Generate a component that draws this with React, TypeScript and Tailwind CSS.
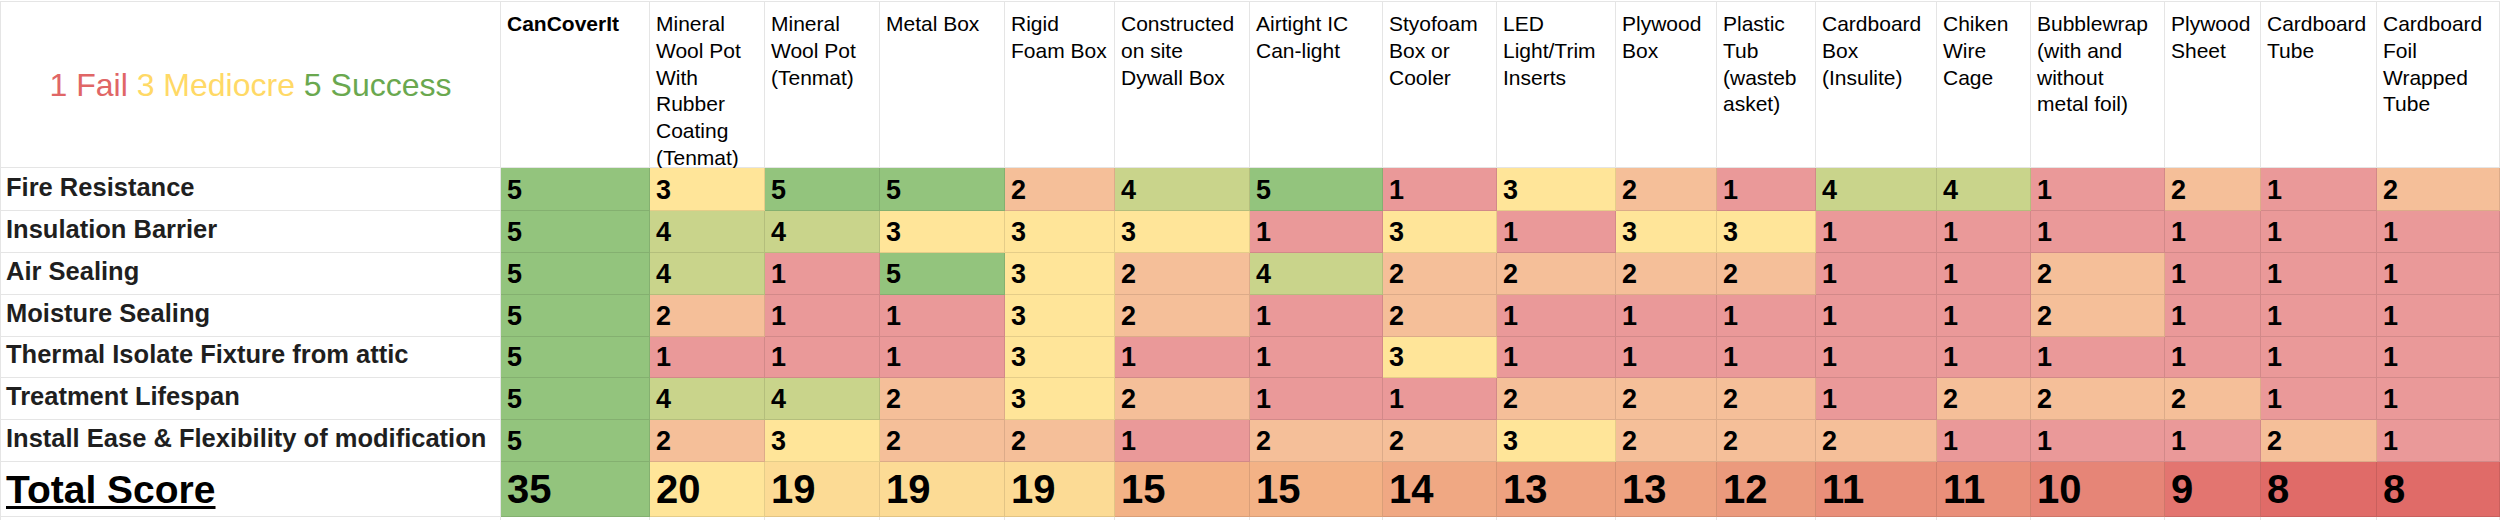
import React from 'react';

interface Material {
  key: string;
  lines: string[];
  bold?: boolean;
}

const MATERIALS: Material[] = [
  { key: 'cancoverit', lines: ['CanCoverIt'], bold: true },
  { key: 'mw-rubber', lines: ['Mineral', 'Wool Pot', 'With', 'Rubber', 'Coating', '(Tenmat)'] },
  { key: 'mw-tenmat', lines: ['Mineral', 'Wool Pot', '(Tenmat)'] },
  { key: 'metal', lines: ['Metal Box'] },
  { key: 'rigid', lines: ['Rigid', 'Foam Box'] },
  { key: 'drywall', lines: ['Constructed', 'on site', 'Dywall Box'] },
  { key: 'airtight', lines: ['Airtight IC', 'Can-light'] },
  { key: 'styofoam', lines: ['Styofoam', 'Box or', 'Cooler'] },
  { key: 'led', lines: ['LED', 'Light/Trim', 'Inserts'] },
  { key: 'plywood-box', lines: ['Plywood', 'Box'] },
  { key: 'plastic', lines: ['Plastic', 'Tub', '(wasteb', 'asket)'] },
  { key: 'cardboard-box', lines: ['Cardboard', 'Box', '(Insulite)'] },
  { key: 'chiken', lines: ['Chiken', 'Wire', 'Cage'] },
  { key: 'bubble', lines: ['Bubblewrap', '(with and', 'without', 'metal foil)'] },
  { key: 'plywood-sheet', lines: ['Plywood', 'Sheet'] },
  { key: 'tube', lines: ['Cardboard', 'Tube'] },
  { key: 'foil-tube', lines: ['Cardboard', 'Foil', 'Wrapped', 'Tube'] },
];

const CRITERIA: { label: string; scores: number[] }[] = [
  { label: 'Fire Resistance', scores: [5, 3, 5, 5, 2, 4, 5, 1, 3, 2, 1, 4, 4, 1, 2, 1, 2] },
  { label: 'Insulation Barrier', scores: [5, 4, 4, 3, 3, 3, 1, 3, 1, 3, 3, 1, 1, 1, 1, 1, 1] },
  { label: 'Air Sealing', scores: [5, 4, 1, 5, 3, 2, 4, 2, 2, 2, 2, 1, 1, 2, 1, 1, 1] },
  { label: 'Moisture Sealing', scores: [5, 2, 1, 1, 3, 2, 1, 2, 1, 1, 1, 1, 1, 2, 1, 1, 1] },
  { label: 'Thermal Isolate Fixture from attic', scores: [5, 1, 1, 1, 3, 1, 1, 3, 1, 1, 1, 1, 1, 1, 1, 1, 1] },
  { label: 'Treatment Lifespan', scores: [5, 4, 4, 2, 3, 2, 1, 1, 2, 2, 2, 1, 2, 2, 2, 1, 1] },
  { label: 'Install Ease & Flexibility of modification', scores: [5, 2, 3, 2, 2, 1, 2, 2, 3, 2, 2, 2, 1, 1, 1, 2, 1] },
];

// conditional-format style colour scale, 1 = red, 3 = yellow, 5 = green
const SCORE_BG: Record<number, string> = {
  1: 'bg-[#ea9999]',
  2: 'bg-[#f5bf99]',
  3: 'bg-[#ffe599]',
  4: 'bg-[#c9d48b]',
  5: 'bg-[#93c47d]',
};

const TOTAL_BG: Record<number, string> = {
  35: 'bg-[#93c47d]',
  20: 'bg-[#ffe599]',
  19: 'bg-[#fcdb95]',
  15: 'bg-[#f3b286]',
  14: 'bg-[#f0a883]',
  13: 'bg-[#eea280]',
  12: 'bg-[#eb9a7d]',
  11: 'bg-[#e98f7a]',
  10: 'bg-[#e68577]',
  9: 'bg-[#e37570]',
  8: 'bg-[#e06b68]',
};

const cell = 'border-r border-b border-black/10';

export default function App() {
  const totals = MATERIALS.map((_, i) =>
    CRITERIA.reduce((sum, row) => sum + row.scores[i], 0)
  );

  return (
    <div className="w-[2500px] h-[520px] overflow-hidden bg-white pt-px font-[Liberation_Sans,Arial,sans-serif] text-black">
      <div className="grid grid-cols-[501px_149px_115px_115px_125px_110px_135px_133px_114px_119px_101px_99px_121px_94px_134px_96px_116px_123px] grid-rows-[166px_43px_42px_42px_42px_41px_42px_42px_55px_3px] border-t border-black/10">
        {/* Header row */}
        <div className={`${cell} border-l flex items-center justify-center text-[32px] leading-none`}>
          <span className="text-[#e06666]">1 Fail</span>
          <span className="text-[#ffd966]">&nbsp;3 Mediocre</span>
          <span className="text-[#6aa84f]">&nbsp;5 Success</span>
        </div>
        {MATERIALS.map((m) => (
          <div
            key={m.key}
            className={`${cell} pt-[9px] pl-[6px] text-[21px] leading-[26.8px] ${m.bold ? 'font-bold' : ''}`}
          >
            {m.lines.map((line) => (
              <div key={line} className="whitespace-nowrap">
                {line}
              </div>
            ))}
          </div>
        ))}

        {/* Criteria rows */}
        {CRITERIA.map((row) => (
          <React.Fragment key={row.label}>
            <div className={`${cell} border-l flex items-end pl-[5px] pb-[10px] text-[25.5px] font-bold leading-none text-[#1f1f1f] whitespace-nowrap`}>
              {row.label}
            </div>
            {row.scores.map((s, i) => (
              <div
                key={MATERIALS[i].key}
                className={`${cell} ${SCORE_BG[s]} flex items-end pl-[6px] pb-[6px] text-[27px] font-bold leading-none`}
              >
                {s}
              </div>
            ))}
          </React.Fragment>
        ))}

        {/* Total row */}
        <div className={`${cell} border-l flex items-end pl-[5px] pb-[7px] text-[39px] font-bold leading-none`}>
          <span className="underline decoration-[3px] underline-offset-[3px]">Total Score</span>
        </div>
        {totals.map((t, i) => (
          <div
            key={MATERIALS[i].key}
            className={`${cell} ${TOTAL_BG[t]} flex items-end pl-[6px] pb-[7px] text-[40px] font-bold leading-none`}
          >
            {t}
          </div>
        ))}

        {/* start of the next (empty) sheet row */}
        <div className="border-r border-l border-black/10" />
        {MATERIALS.map((m) => (
          <div key={m.key} className="border-r border-black/10" />
        ))}
      </div>
    </div>
  );
}
